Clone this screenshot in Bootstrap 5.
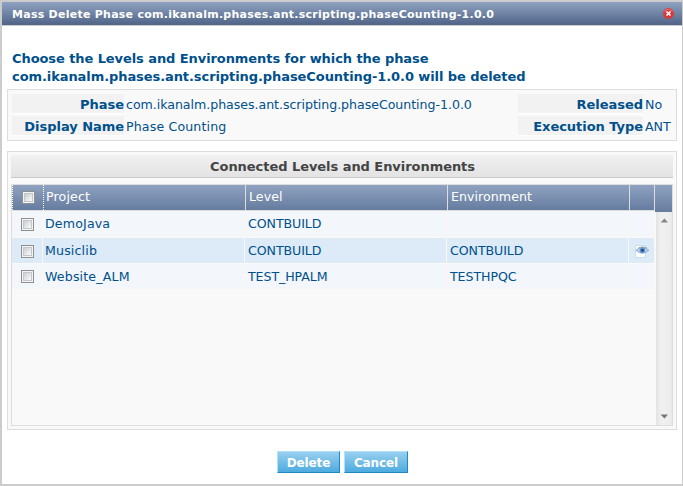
<!DOCTYPE html>
<html lang="en">
<head>
<meta charset="utf-8">
<title>Mass Delete Phase</title>
<meta name="viewport" content="width=device-width, initial-scale=1">
<link href="https://cdn.jsdelivr.net/npm/bootstrap@5.3.0/dist/css/bootstrap.min.css" rel="stylesheet">
<style>
body{font-family:Verdana,"DejaVu Sans",sans-serif;font-size:12.6px;line-height:18px;color:#00508c;width:683px;height:486px;overflow:hidden}
.dialog{width:683px;height:486px;border:2px solid #ccc;border-right-width:1px;background:#fff}
.titlebar{height:24px;background:linear-gradient(#8fa2c0,#506488);border-bottom:1px solid #ccc;color:#fff;font-weight:700;font-size:11px;letter-spacing:.255px;padding:4px 9px 0 10px}
.close-icon{margin:2px -1px 0 0}
.heading{font-size:13px;font-weight:700;margin:24px 0 0 10px;height:39px;line-height:18px;letter-spacing:-.08px}
.panel{margin:0 5px 0 5px;border:1px solid #ddd;background:#f9f9f9}
.facts{height:52px;padding:4px;display:grid;grid-template-columns:112px 394px 125px auto;grid-auto-rows:20px;row-gap:2px;line-height:21px}
.facts dt{background:#f2f2f2;border-bottom:1px solid #fff;text-align:right;font-size:13px;letter-spacing:-.04px}
.facts dd{margin:0;padding-left:2px}
.facts .long-name{letter-spacing:-.04px}
.facts .display-name{letter-spacing:.14px}
.connected{margin-top:10px;height:279px;padding:3px}
.caption-bar{height:23px;background:linear-gradient(#f1f1f1,#e3e3e3);border-bottom:1px solid #ccc;color:#444;font-size:13px;font-weight:700;line-height:23px;letter-spacing:-.05px;padding-left:1px}
.grid-box{margin-top:6px;height:242px;border:1px solid #ddd;background:#f9f9f9}
.grid-row{display:grid;grid-template-columns:31px 202px 202px 182px 26px;height:26px;line-height:25px;letter-spacing:-.08px;background:#f3f6fb;border-bottom:1px solid #f9f9f5}
.grid-row>div{border-right:1px solid #f9f7ee;padding-left:3px;white-space:nowrap}
.grid-row>.project{padding-left:2px;letter-spacing:.15px}
.grid-row.first-row{height:27px;line-height:26px}
.grid-row.alt{background:#dcebf7}
.grid-row.head{height:26px;line-height:24px;letter-spacing:.05px;background:linear-gradient(#8fa2c0,#667c9f);border-bottom:1px solid #ddd;color:#fff;grid-template-columns:32px 202px 202px 182px 25px}
.head>div{border-right-color:#ddd}
.head>.pick{border-left:1px dotted #fff;border-right:1px dotted #fff}
.box{width:13px;height:13px;border:1px solid #8e8f8f;background:linear-gradient(135deg,#b8bfc8,#f7f7f7 75%);box-shadow:inset 0 0 0 1px #f4f4f4,inset 0 0 0 2px #c3c7cc;appearance:none;margin:0;display:block}
.grid-row>.pick{padding:6px 0 0 9px}
.grid-row.first-row>.pick,.grid-row.alt>.pick{padding-top:7px}
.grid-row.alt>.view{padding:4px 0 0 3px}
.scroll{width:17px}
.scroll-head{height:27px;background:linear-gradient(#8fa2c0,#667c9f)}
.track{width:16px;background:linear-gradient(90deg,#e3e3e3,#f0f0f0 30%,#eee 80%,#e8e8e8);padding:6px 4px 6px 0}
.act{height:22px;border:1px solid #aee2f8;border-right-color:#2188c8;border-bottom-color:#2188c8;border-radius:0;background:linear-gradient(#98cfef,#4dabdf);color:#fff;font-weight:700;font-size:12px;letter-spacing:-.1px;line-height:22px;padding:0 0 0 1px;width:64px}
.act:first-child{width:63px}
.actions{margin-top:21px}
.sp{display:inline-block;white-space:nowrap}
</style>
</head>
<body>
<main class="dialog d-flex flex-column">
<header class="titlebar d-flex justify-content-between"><span>Mass Delete Phase com.ikanalm.phases.ant.scripting.phaseCounting-1.0.0</span>
<svg class="close-icon" width="11" height="11" viewBox="0 0 11 11"><circle cx="5.5" cy="5.5" r="5.4" fill="#d8383a"/><path d="M1.5 4a4.3 4.3 0 0 1 8 0" fill="none" stroke="#ea7573"/><path d="M3.5 3.5l4 4m0-4L3.5 7.5" stroke="#fff" stroke-width="1.6"/></svg></header>
<h1 class="heading mb-0"><span class="sp">Choose the Levels and Environments for which the phase</span><br><span class="sp">com.ikanalm.phases.ant.scripting.phaseCounting-1.0.0 will be deleted</span></h1>
<dl class="facts panel mb-0"><dt>Phase</dt><dd class="long-name">com.ikanalm.phases.ant.scripting.phaseCounting-1.0.0</dd><dt>Released</dt><dd>No</dd><dt>Display Name</dt><dd class="display-name">Phase Counting</dd><dt>Execution Type</dt><dd>ANT</dd></dl>
<section class="panel connected">
<div class="caption-bar text-center">Connected Levels and Environments</div>
<div class="grid-box d-flex">
<div class="flex-grow-1">
<div class="grid-row head"><div class="pick"><input type="checkbox" class="box"></div><div class="project">Project</div><div>Level</div><div>Environment</div><div></div></div>
<div class="grid-row first-row"><div class="pick"><input type="checkbox" class="box"></div><div class="project">DemoJava</div><div>CONTBUILD</div><div></div><div></div></div>
<div class="grid-row alt"><div class="pick"><input type="checkbox" class="box"></div><div class="project">Musiclib</div><div>CONTBUILD</div><div>CONTBUILD</div><div class="view"><svg class="d-block" width="18" height="17" viewBox="0 0 18 17"><path d="M3.5 3.5h10v12h-10z" fill="#fff" stroke="#c3e0f5"/><path d="M4 8.3Q10.4 2.6 16.8 8.3 10.4 14 4 8.3z" fill="#c3d9ef" stroke="#7f9fc4" stroke-width=".9"/><circle cx="10.4" cy="8.3" r="2.8" fill="#5f91cb"/><circle cx="10.4" cy="8.3" r="1.3" fill="#123f80"/><path d="M6 6Q10.4 3.5 15 6" fill="none" stroke="#8590a3" stroke-width=".7"/></svg></div></div>
<div class="grid-row"><div class="pick"><input type="checkbox" class="box"></div><div class="project">Website_ALM</div><div>TEST_HPALM</div><div>TESTHPQC</div><div></div></div>
</div>
<div class="scroll d-flex flex-column align-items-end"><div class="scroll-head w-100"></div>
<div class="track flex-grow-1 d-flex flex-column justify-content-between align-items-end"><svg class="d-block" width="8" height="5" viewBox="0 0 8 5"><path d="M.5 4.5 4.5.5l3.5 4z" fill="#858585"/></svg><svg class="d-block" width="8" height="5" viewBox="0 0 8 5"><path d="M.5.5H8l-3.5 4z" fill="#777"/></svg></div></div>
</div>
</section>
<footer class="actions d-flex justify-content-center gap-1"><button class="act btn">Delete</button><button class="act btn">Cancel</button></footer>
</main>
<script src="https://cdn.jsdelivr.net/npm/bootstrap@5.3.0/dist/js/bootstrap.bundle.min.js"></script>
</body>
</html>
